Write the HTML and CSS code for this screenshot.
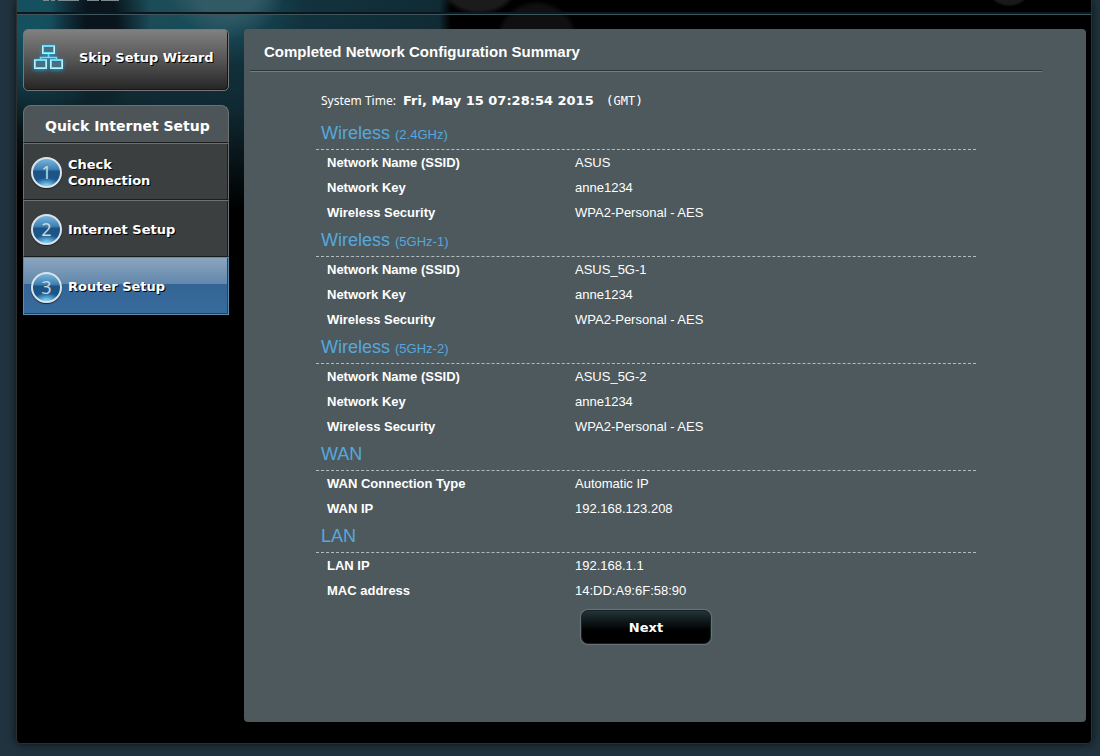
FILE: index.html
```
<!DOCTYPE html>
<html lang="en">
<head>
<meta charset="utf-8">
<meta name="viewport" content="width=device-width, initial-scale=1">
<title>Quick Internet Setup</title>
<link rel="stylesheet" href="styles.css">
</head>
<body>
<div class="frame">
  <header class="topbar">
    <svg class="brand" width="90" height="2" viewBox="0 0 90 2" aria-hidden="true"><path d="M6 0h6v1H6zM14 0h4v1h-4zM21 0h21v1H21zM50 0h12v1H50zM64 0h18v1H64z" fill="#7d8b8f"/></svg>
  </header>
  <div class="columns">
    <aside class="sidebar">
      <button class="skip" type="button">
        <svg width="40" height="34" viewBox="0 0 40 34" aria-hidden="true">
          <g class="skip-glow" fill="#45707f" stroke="#6bdcfb" stroke-width="2">
            <rect x="14" y="6" width="11" height="7"/>
            <rect x="6" y="20" width="11" height="8"/>
            <rect x="22" y="20" width="11" height="8"/>
            <path d="M19.500 14v4M11.500 20v-2.500h16V20" stroke-width="1.500" fill="none"/>
          </g>
          <path d="M13.500 6v7.500h12V6M5.500 20v8.500h12V20M21.500 20v8.500h12V20" stroke="#b4f3ff" fill="none"/>
        </svg>
        <span>Skip Setup Wizard</span>
      </button>
      <nav class="menu" aria-label="Quick Internet Setup">
        <h2 class="menu-title">Quick Internet Setup</h2>
        <a class="step" href="#check"><span class="num">1</span><span class="step-name">Check Connection</span></a>
        <a class="step" href="#internet"><span class="num">2</span><span class="step-name">Internet Setup</span></a>
        <a class="step active" href="#router" aria-current="step"><span class="num">3</span><span class="step-name">Router Setup</span></a>
      </nav>
    </aside>
    <main class="panel">
      <h1 class="title">Completed Network Configuration Summary</h1>
      <div class="summary">
        <p class="time">System Time: <b>Fri, May 15 07:28:54 2015</b><span class="zone">(<span class="zone-name">GMT</span>)</span></p>
        <section>
          <h3>Wireless <small>(2.4GHz)</small></h3>
          <table>
            <tr><th scope="row">Network Name (SSID)</th><td>ASUS</td></tr>
            <tr><th scope="row">Network Key</th><td>anne1234</td></tr>
            <tr><th scope="row">Wireless Security</th><td>WPA2-Personal - AES</td></tr>
          </table>
        </section>
        <section>
          <h3>Wireless <small>(5GHz-1)</small></h3>
          <table>
            <tr><th scope="row">Network Name (SSID)</th><td>ASUS_5G-1</td></tr>
            <tr><th scope="row">Network Key</th><td>anne1234</td></tr>
            <tr><th scope="row">Wireless Security</th><td>WPA2-Personal - AES</td></tr>
          </table>
        </section>
        <section>
          <h3>Wireless <small>(5GHz-2)</small></h3>
          <table>
            <tr><th scope="row">Network Name (SSID)</th><td>ASUS_5G-2</td></tr>
            <tr><th scope="row">Network Key</th><td>anne1234</td></tr>
            <tr><th scope="row">Wireless Security</th><td>WPA2-Personal - AES</td></tr>
          </table>
        </section>
        <section>
          <h3>WAN</h3>
          <table>
            <tr><th scope="row">WAN Connection Type</th><td>Automatic IP</td></tr>
            <tr><th scope="row">WAN IP</th><td>192.168.123.208</td></tr>
          </table>
        </section>
        <section>
          <h3>LAN</h3>
          <table>
            <tr><th scope="row">LAN IP</th><td>192.168.1.1</td></tr>
            <tr><th scope="row">MAC address</th><td>14:DD:A9:6F:58:90</td></tr>
          </table>
        </section>
        <button class="next" type="button">Next</button>
      </div>
    </main>
  </div>
</div>
</body>
</html>
```
FILE: styles.css
```
* {
  box-sizing: border-box;
}

body {
  margin: 0;
  padding: 0 8px 12px 16px;
  background: #21333e;
  color: #fff;
  font-family: "Liberation Sans", Arial, sans-serif;
  font-size: 13px;
}

h1, h2, h3, p {
  margin: 0;
}

.frame {
  border: 1px solid #2f2f2f;
  border-top: 0;
  border-radius: 0 0 5px 5px;
  box-shadow: 0 0 8px #0a1218;
  background:
    radial-gradient(circle at 992px -18px, #191919 22px, transparent 25px),
    radial-gradient(circle at 462px -30px, #1b1b1c 40px, transparent 46px),
    radial-gradient(circle at 520px 42px, #101010 36px, transparent 42px),
    radial-gradient(circle at 560px 20px, #000 126px, transparent 138px),
    radial-gradient(ellipse 50px 90px at 84px 20px, rgba(9, 18, 27, 0.95) 30%, transparent),
    radial-gradient(circle at 210px -22px, rgba(53, 92, 103, 0.9) 36px, transparent 62px),
    radial-gradient(circle at 130px -10px, #1b4c57 36px, transparent 48px),
    radial-gradient(ellipse 110px 55px at 180px 14px, #184c59 30%, transparent),
    radial-gradient(ellipse 90px 120px at 10px 10px, #15505f 20%, transparent),
    radial-gradient(ellipse 460px 210px at 210px 0, #123744 0, #102a33 50%, transparent),
    #000;
}

.topbar {
  height: 15px;
  padding-left: 20px;
  border-bottom: 1px solid #3c555f;
  box-shadow: inset 0 -2px #0b171c;
}

.brand {
  display: block;
}

.columns {
  display: flex;
  gap: 15px;
  padding: 14px 5px 21px 6px;
}

.sidebar {
  flex: 0 0 206px;
  font-family: Verdana, "DejaVu Sans", sans-serif;
}

.skip {
  display: flex;
  align-items: center;
  gap: 10px;
  width: 100%;
  height: 62px;
  margin-bottom: 14px;
  padding: 0 5px 6px;
  border: 1px solid #777;
  border-radius: 5px;
  background: linear-gradient(#808080, #555 50%, #252525);
  box-shadow: inset -1px -1px #161616;
  color: #fff;
  font: bold 13px Verdana, "DejaVu Sans", sans-serif;
  text-shadow: 1px 1px #000;
  white-space: nowrap;
}

.skip-glow {
  filter: drop-shadow(0 1px 2px #1b9bd0);
}

.menu-title {
  height: 38px;
  padding-left: 21px;
  border: 1px solid #6b7172;
  border-bottom-color: #1a1d1e;
  border-radius: 8px 8px 0 0;
  background: #4d5558;
  font-size: 14px;
  line-height: 40px;
  white-space: nowrap;
}

.step {
  display: flex;
  align-items: center;
  gap: 6px;
  height: 57px;
  padding: 2px 0 0 7px;
  border: 1px solid #6b7172;
  border-bottom-color: #1a1d1e;
  background: #3b3f40;
  box-shadow: inset -1px 0 #1a1d1e;
  color: #fff;
  font-size: 13px;
  font-weight: bold;
  line-height: 16px;
  text-decoration: none;
  text-shadow: 1px 1px #000;
}

.step-name {
  max-width: 110px;
}

.step.active {
  height: 58px;
  border-color: #5c8eae;
  background: linear-gradient(#8aa5bf, #6288ab 46%, #336494 46%, #386c9e);
  box-shadow: inset -1px -1px #23425f;
}

.num {
  flex: 0 0 31px;
  height: 31px;
  border: 2px solid #d8e3ea;
  border-radius: 50%;
  background:
    radial-gradient(ellipse 14px 8px at 50% 100%, #75c5ef 20%, transparent),
    linear-gradient(#78b5dc, #3f81b3 38%, #1b5384 46%, #1c5a90);
  box-shadow: 0 1px 1px #222;
  color: #ccd6df;
  font: 18px/26px "Noto Sans", "Open Sans", sans-serif;
  text-align: center;
  text-shadow: none;
}

.panel {
  flex: 1;
  min-width: 0;
  padding: 0 44px 78px 6px;
  border-radius: 4px;
  background: #4d595d;
}

.title {
  height: 43px;
  padding-left: 14px;
  border-bottom: 1px solid #737e83;
  box-shadow: inset 0 -1px #29343a;
  font-size: 15px;
  line-height: 46px;
}

.summary {
  padding: 15px 66px 0;
}

.time {
  height: 31px;
  padding-left: 5px;
  font: 12px/28px "Noto Sans", "Open Sans", sans-serif;
}

.time b {
  padding: 0 12px 0 4px;
  font: bold 13px/28px Verdana, "DejaVu Sans", sans-serif;
}

.zone {
  font: 13px/28px "DejaVu Sans Mono", monospace;
}

.zone-name {
  font-size: 12px;
}

h3 {
  height: 32px;
  padding-left: 5px;
  border-bottom: 1px dashed #b5babc;
  color: #56a8dd;
  font-size: 18px;
  font-weight: normal;
  line-height: 30px;
}

h3 small {
  font-size: 13px;
}

table {
  width: 100%;
  border-collapse: collapse;
  table-layout: fixed;
}

th, td {
  height: 25px;
  padding: 0;
  text-align: left;
}

th {
  width: 259px;
  padding-left: 11px;
}

.next {
  display: block;
  width: 130px;
  height: 34px;
  margin: 7px auto 0;
  border: 1px solid #182326;
  border-radius: 7px;
  background: linear-gradient(#223439, #000 60%);
  box-shadow: 0 0 1px 1px #68757a;
  color: #fff;
  font: bold 13px Verdana, "DejaVu Sans", sans-serif;
}
```
